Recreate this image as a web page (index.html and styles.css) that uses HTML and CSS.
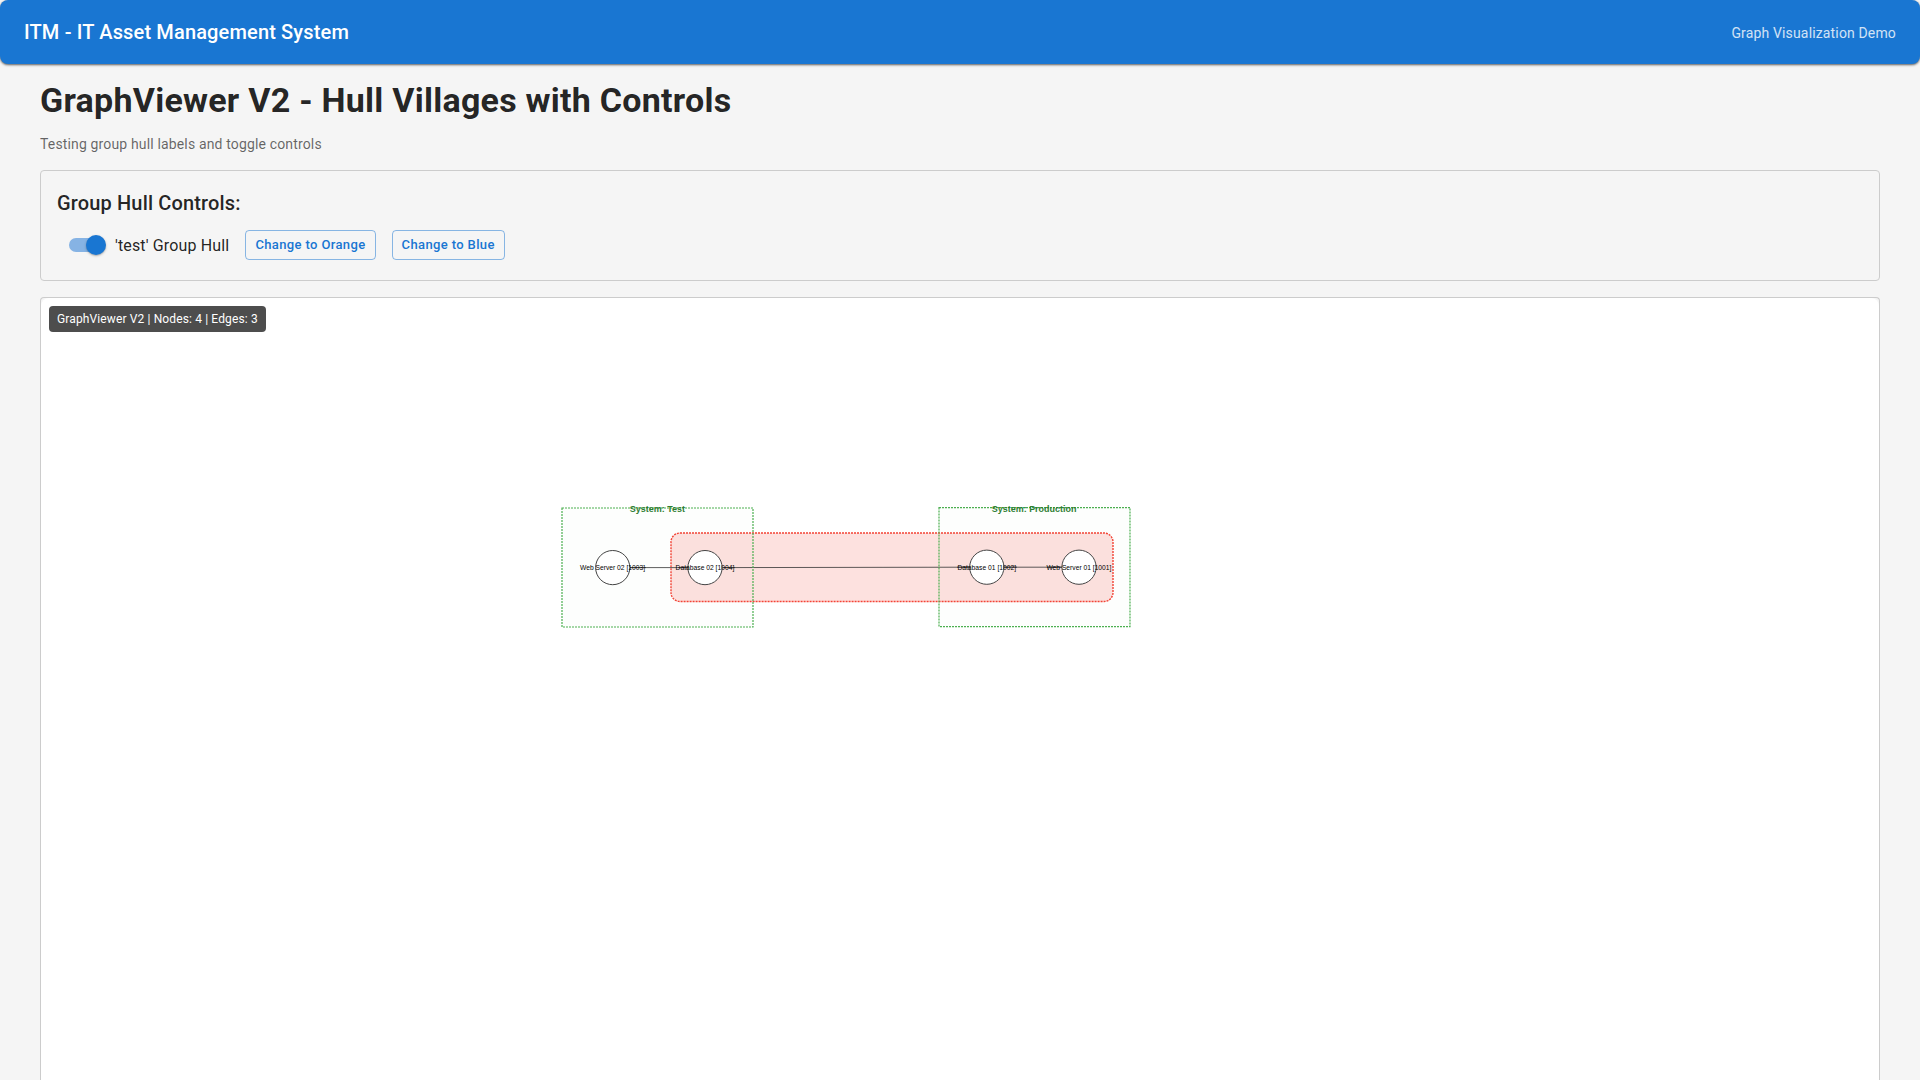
FILE: index.html
```html
<!DOCTYPE html>
<html lang="en">
<head>
<meta charset="utf-8">
<title>ITM - IT Asset Management System</title>
<link rel="stylesheet" href="styles.css">
</head>
<body>
<header class="app-bar">
  <div class="app-title">ITM - IT Asset Management System</div>
  <div class="app-note">Graph Visualization Demo</div>
</header>
<main class="page">
  <h1 class="page-title">GraphViewer V2 - Hull Villages with Controls</h1>
  <p class="subtitle">Testing group hull labels and toggle controls</p>
  <section class="controls">
    <h2 class="controls-title">Group Hull Controls:</h2>
    <div class="controls-row">
      <label class="toggle"><span class="switch"><span class="track"><span class="thumb"></span></span></span><span class="toggle-text">'test' Group Hull</span></label>
      <button class="btn" type="button">Change to Orange</button>
      <button class="btn" type="button">Change to Blue</button>
    </div>
  </section>
  <section class="viewer">
    <svg class="graph" width="1838" height="782" viewBox="41 298 1838 782">
      <rect class="hull" x="671" y="533" width="442" height="68.5" rx="9"/>
      <path class="edge" d="M630 567.6H688M722.5 567.6L969.5 567.2M1004 567.2H1062"/>
      <g class="system">
        <rect x="562" y="508" width="191" height="119"/>
        <rect x="939" y="507.6" width="191" height="119"/>
      </g>
      <g class="node">
        <circle cx="612.7" cy="567.6" r="17.1"/>
        <circle cx="705" cy="567.6" r="17.1"/>
        <circle cx="986.8" cy="567.2" r="17.1"/>
        <circle cx="1079" cy="567.2" r="17.1"/>
      </g>
      <path class="edge" d="M630 567.6H646M678 567.6H688M722.5 567.6H735M957 567.2H969.5M1004 567.2H1017M1047 567.2H1062"/>
      <g class="node-label">
        <text x="580" y="570.2" textLength="65" lengthAdjust="spacingAndGlyphs">Web Server 02 [1003]</text>
        <text x="675.6" y="570.2" textLength="58.7" lengthAdjust="spacingAndGlyphs">Database 02 [1004]</text>
        <text x="957.4" y="569.8" textLength="58.7" lengthAdjust="spacingAndGlyphs">Database 01 [1002]</text>
        <text x="1046.4" y="569.8" textLength="65" lengthAdjust="spacingAndGlyphs">Web Server 01 [1001]</text>
      </g>
      <g class="system-label">
        <text x="629.8" y="512" textLength="55.2" lengthAdjust="spacingAndGlyphs">System: Test</text>
        <text x="991.8" y="511.8" textLength="84.6" lengthAdjust="spacingAndGlyphs">System: Production</text>
      </g>
    </svg>
    <div class="badge">GraphViewer V2 | Nodes: 4 | Edges: 3</div>
  </section>
</main>
</body>
</html>
```
FILE: styles.css
```css
* { box-sizing: border-box; }
body {
  margin: 0;
  height: 100vh;
  overflow: hidden;
  background: #f5f5f5;
  color: rgba(0, 0, 0, .87);
  font-family: Roboto, "Liberation Sans", sans-serif;
}
.app-bar {
  display: flex;
  align-items: center;
  justify-content: space-between;
  height: 64px;
  padding: 0 24px;
  border-radius: 8px;
  background: #1976d2;
  color: #fff;
  box-shadow: 0 1px 3px rgba(0, 0, 0, .3), 0 1px 2px rgba(0, 0, 0, .4);
}
.app-title { font-size: 20px; font-weight: 500; line-height: 32px; letter-spacing: .0075em; }
.app-note { padding-top: 1px; font-size: 14px; line-height: 20px; letter-spacing: .01071em; opacity: .8; }
.page { padding: 15px 40px 0; }
.page-title { margin: 0 0 13px; font-size: 34px; font-weight: 700; line-height: 42px; letter-spacing: .00735em; }
.subtitle { margin: 0 0 16px; color: rgba(0, 0, 0, .6); font-size: 14px; line-height: 20px; letter-spacing: .01071em; }
.controls { padding: 16px; border: 1px solid #ccc; border-radius: 4px; }
.controls-title { margin: 0 0 7px; font-size: 20px; font-weight: 500; line-height: 32px; letter-spacing: .0075em; }
.controls-row { display: flex; align-items: center; gap: 16px; height: 38px; }
.toggle { display: flex; align-items: center; font-size: 16px; line-height: 24px; letter-spacing: .00938em; }
.toggle-text { padding-top: 2px; }
.switch { display: flex; width: 58px; height: 38px; padding: 12px; }
.track { display: flex; align-items: center; justify-content: flex-end; width: 34px; height: 14px; border-radius: 7px; background: #86b3e4; }
.thumb {
  flex: none;
  width: 20px;
  height: 20px;
  margin-right: -3px;
  border-radius: 50%;
  background: #1976d2;
  box-shadow: 0 1px 3px rgba(0, 0, 0, .2), 0 1px 1px rgba(0, 0, 0, .14);
}
.btn {
  padding: 3px 9px;
  border: 1px solid rgba(25, 118, 210, .5);
  border-radius: 4px;
  background: transparent;
  color: #1976d2;
  font: 500 13px/22.75px Roboto, "Liberation Sans", sans-serif;
  letter-spacing: .02857em;
}
.viewer {
  position: relative;
  margin-top: 16px;
  border: 1px solid #ccc;
  border-bottom: 0;
  border-radius: 4px 4px 0 0;
}
.graph { display: block; border-radius: 8px 8px 0 0; background: #fff; }
.badge {
  position: absolute;
  top: 8px;
  left: 8px;
  padding: 3px 8px;
  border-radius: 4px;
  background: #4d4d4d;
  color: #fff;
  font-size: 12px;
  line-height: 20px;
  letter-spacing: .01071em;
}
.hull { fill: rgba(244, 67, 54, .16); stroke: #f44336; stroke-width: 1.4; stroke-dasharray: 2 1; }
.edge { fill: none; stroke: #333; stroke-width: .8; }
.system { fill: rgba(76, 175, 80, .01); stroke: #4caf50; stroke-width: 1.2; stroke-dasharray: 2 1; }
.node { fill: #fff; stroke: #444; stroke-width: 1; }
.node-label { fill: #000; font: 7.2px "Liberation Sans", Arial, sans-serif; }
.system-label { fill: #2e7d32; font: bold 9.6px "Liberation Sans", Arial, sans-serif; }
```
